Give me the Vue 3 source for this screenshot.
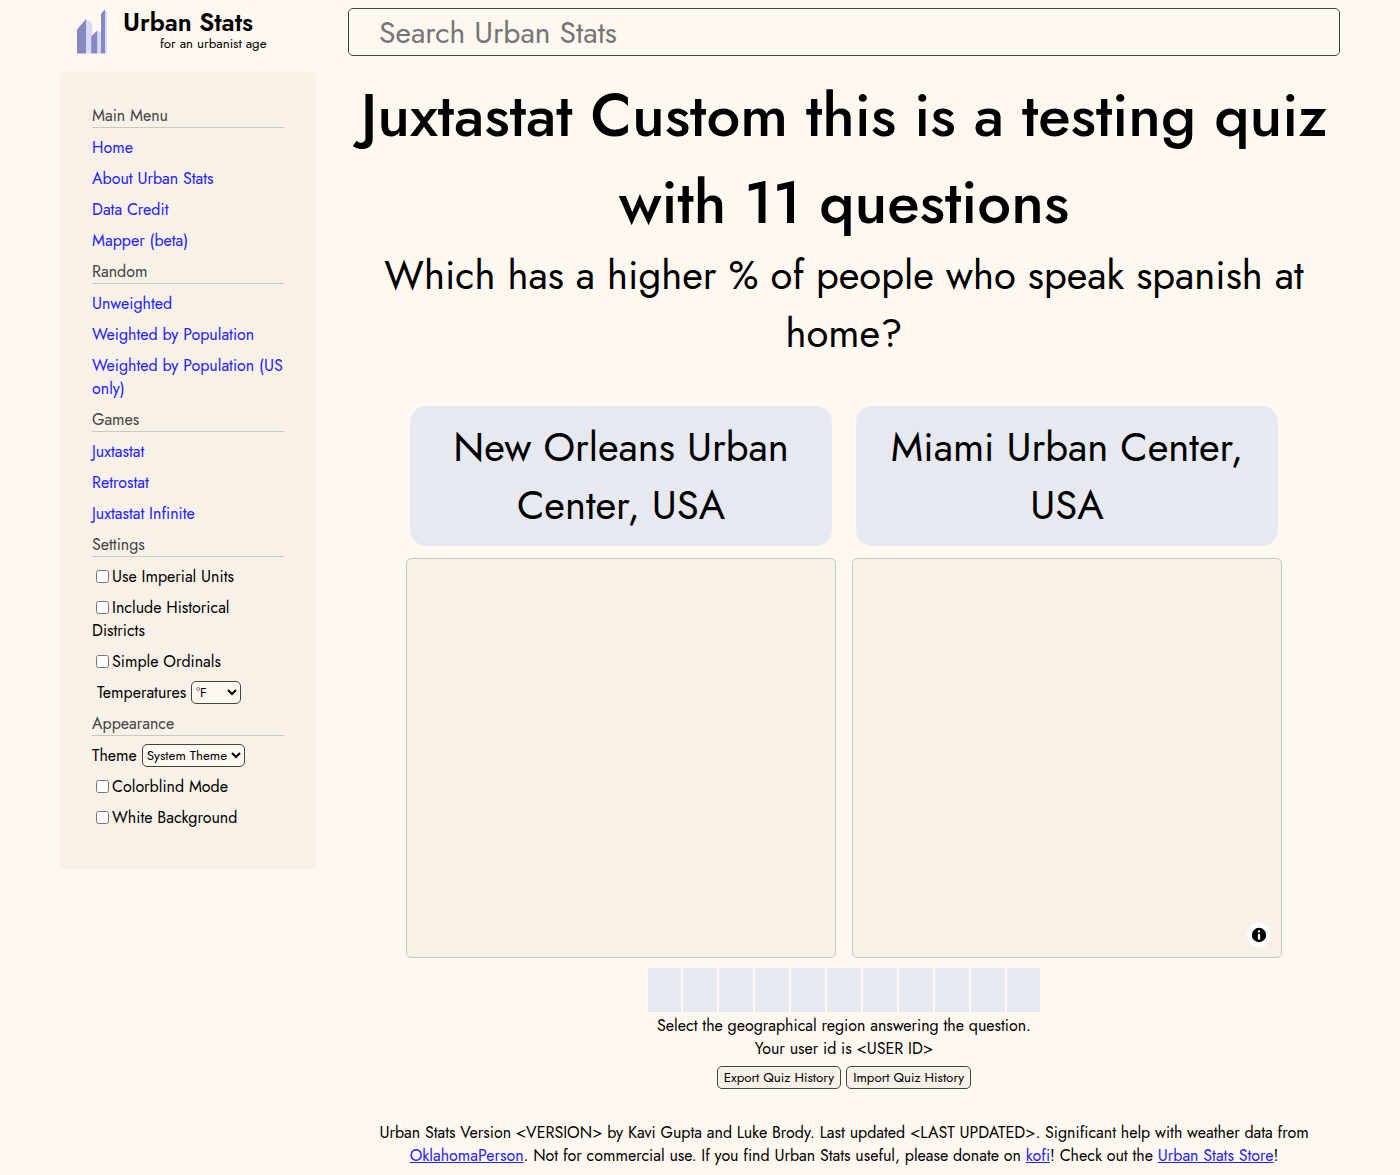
<script setup>
import { ref } from 'vue'

const sections = [
  { title: 'Main Menu', links: ['Home', 'About Urban Stats', 'Data Credit', 'Mapper (beta)'] },
  { title: 'Random', links: ['Unweighted', 'Weighted by Population', 'Weighted by Population (US only)'] },
  { title: 'Games', links: ['Juxtastat', 'Retrostat', 'Juxtastat Infinite'] },
]
const unitSettings = ['Use Imperial Units', 'Include Historical Districts', 'Simple Ordinals']
const themeSettings = ['Colorblind Mode', 'White Background']
const choices = [
  { name: 'New Orleans Urban Center, USA', info: false },
  { name: 'Miami Urban Center, USA', info: true },
]
const temperature = ref('°F')
const theme = ref('System Theme')
</script>

<template>
  <div class="page">
    <header class="header">
      <a class="brand" href="#">
        <svg class="logo" viewBox="0 0 32 46" aria-hidden="true">
          <path fill="#d9d9ff" d="M10 11l6.200 4.500V45.400H10z" />
          <path fill="#8888c0" d="M1 21.500L10 11v34.400H1z" />
          <path fill="#d9d9ff" d="M21 22.500l4 2.500v20.400h-4z" />
          <path fill="#8888c0" d="M15.200 28.500L21.200 22.500v22.900h-6z" />
          <path fill="#d9d9ff" d="M28.500 1.500l2.500 2.500v41.400h-2.500z" />
          <path fill="#8888c0" d="M25 5.500l4-4v43.900h-4z" />
        </svg>
        <span class="brand-text">
          <span class="brand-name">Urban Stats</span>
          <span class="brand-tag">for an urbanist age</span>
        </span>
      </a>
      <input class="search" type="text" placeholder="Search Urban Stats" aria-label="Search Urban Stats">
    </header>

    <div class="body">
      <nav class="sidebar">
        <section v-for="s in sections" :key="s.title">
          <h2>{{ s.title }}</h2>
          <ul>
            <li v-for="l in s.links" :key="l"><a href="#">{{ l }}</a></li>
          </ul>
        </section>
        <section>
          <h2>Settings</h2>
          <ul>
            <li v-for="s in unitSettings" :key="s"><label><input type="checkbox">{{ s }}</label></li>
            <li class="indented">
              <label for="temperature">Temperatures</label>
              <select id="temperature" v-model="temperature" class="temperature">
                <option>°F</option>
                <option>°C</option>
              </select>
            </li>
          </ul>
        </section>
        <section>
          <h2>Appearance</h2>
          <ul>
            <li>
              <label for="theme">Theme</label>
              <select id="theme" v-model="theme" class="theme">
                <option>System Theme</option>
                <option>Light Mode</option>
                <option>Dark Mode</option>
              </select>
            </li>
            <li v-for="s in themeSettings" :key="s"><label><input type="checkbox">{{ s }}</label></li>
          </ul>
        </section>
      </nav>

      <main class="main">
        <h1>Juxtastat Custom this is a testing quiz with 11 questions</h1>
        <p class="question">Which has a higher % of people who speak spanish at home?</p>

        <div class="choices">
          <div v-for="c in choices" :key="c.name" class="choice">
            <button type="button" class="answer">{{ c.name }}</button>
            <div class="map">
              <button v-if="c.info" type="button" class="info" aria-label="Toggle attribution">
                <svg viewBox="0 0 20 20" width="24" height="24" fill-rule="evenodd" aria-hidden="true">
                  <path d="M4 10a6 6 0 1 0 12 0 6 6 0 1 0-12 0m5-3a1 1 0 1 0 2 0 1 1 0 1 0-2 0m0 3a1 1 0 1 1 2 0v3a1 1 0 1 1-2 0" />
                </svg>
              </button>
            </div>
          </div>
        </div>

        <div class="progress">
          <span v-for="n in 11" :key="n" class="cell"></span>
        </div>
        <p>Select the geographical region answering the question.</p>
        <p>Your user id is &lt;USER ID&gt;</p>
        <div class="history">
          <button type="button">Export Quiz History</button>
          <button type="button">Import Quiz History</button>
        </div>

        <footer>
          Urban Stats Version &lt;VERSION&gt; by Kavi Gupta and Luke Brody. Last updated &lt;LAST UPDATED&gt;.
          Significant help with weather data from <a href="#">OklahomaPerson</a>. Not for commercial use. If you
          find Urban Stats useful, please donate on <a href="#">kofi</a>! Check out the <a href="#">Urban Stats Store</a>!
        </footer>
      </main>
    </div>
  </div>
</template>

<style>
body {
  margin: 0;
  background: #fff8f0;
}
</style>

<style scoped>
.page {
  padding: 8px 60px;
  color: #000;
  font: 16px/23px Jost, Lato, sans-serif;
}

.page * {
  box-sizing: border-box;
}

h1,
h2,
p,
ul {
  margin: 0;
  padding: 0;
  font-weight: 400;
}

ul {
  list-style: none;
}

a {
  color: #2222ff;
}

button,
select,
input {
  font-family: inherit;
  color: #000;
}

.header,
.body {
  display: flex;
  gap: 32px;
}

.header {
  margin-bottom: 16px;
}

.brand {
  display: flex;
  flex: 0 0 256px;
  gap: 15px;
  padding-left: 16px;
  color: #000;
  text-decoration: none;
}

.logo {
  width: 32px;
  height: 46px;
}

.brand-text {
  display: flex;
  flex-direction: column;
}

.brand-name {
  font-size: 25px;
  font-weight: 600;
  line-height: 28px;
}

.brand-tag {
  padding-left: 37px;
  font-size: smaller;
  line-height: 16px;
}

.search {
  flex: 1;
  min-width: 0;
  height: 48px;
  padding: 0 30px;
  border: 1px solid #444;
  border-radius: 5px;
  background: #fff8f0;
  font-size: 30px;
}

.search::placeholder {
  color: #757575;
}

.sidebar {
  flex: 0 0 256px;
  align-self: flex-start;
  padding: 32px;
  border-radius: 5px;
  background: #f7f1e8;
}

.sidebar h2 {
  margin-bottom: 8px;
  border-bottom: 1px solid #c8c8c8;
  color: #444;
  font-size: 16px;
}

.sidebar li {
  margin-bottom: 8px;
}

.sidebar a {
  text-decoration: none;
}

.sidebar .indented {
  padding-left: 5px;
}

.sidebar input {
  width: 13px;
  height: 13px;
  margin: 0 3px 0 4px;
  vertical-align: -1px;
}

select,
.history button {
  height: 23px;
  border: 1px solid #444;
  border-radius: 5px;
}

select {
  margin: 0 0 0 5px;
  padding: 0;
  background: #fff8f0;
  vertical-align: top;
}

.temperature {
  width: 50px;
}

.theme {
  width: 103px;
}

.main {
  flex: 1;
  min-width: 0;
  text-align: center;
}

h1 {
  font-size: 60px;
  font-weight: 500;
  line-height: 87px;
}

.question {
  margin-bottom: 44px;
  font-size: 40px;
  line-height: 58px;
}

.choices {
  display: flex;
  gap: 16px;
  margin: 0 58px 10px;
}

.choice {
  display: flex;
  flex: 1;
  flex-direction: column;
  gap: 12px;
}

.answer {
  margin: 0 4px;
  padding: 12px;
  border: 0;
  border-radius: 16px;
  background: #e6e9ef;
  font-size: 40px;
  line-height: 58px;
}

.map {
  display: flex;
  align-items: flex-end;
  justify-content: flex-end;
  height: 400px;
  padding: 10px;
  border: 1px solid #c8c8c8;
  border-radius: 5px;
  background: #f7f1e8;
}

.info {
  width: 24px;
  height: 24px;
  padding: 0;
  border: 0;
  border-radius: 12px;
  background: #fff;
}

.info svg {
  display: block;
}

.progress {
  display: flex;
  justify-content: center;
  gap: 2px;
  margin-bottom: 2px;
}

.cell {
  width: 34px;
  height: 44px;
  background: #e6e9ef;
}

.cell:first-child,
.cell:last-child {
  width: 33px;
}

.history {
  display: flex;
  justify-content: center;
  gap: 5px;
  margin: 6px 0 32px;
}

.history button {
  padding: 0 6px;
  background: #f7f1e8;
}
</style>
